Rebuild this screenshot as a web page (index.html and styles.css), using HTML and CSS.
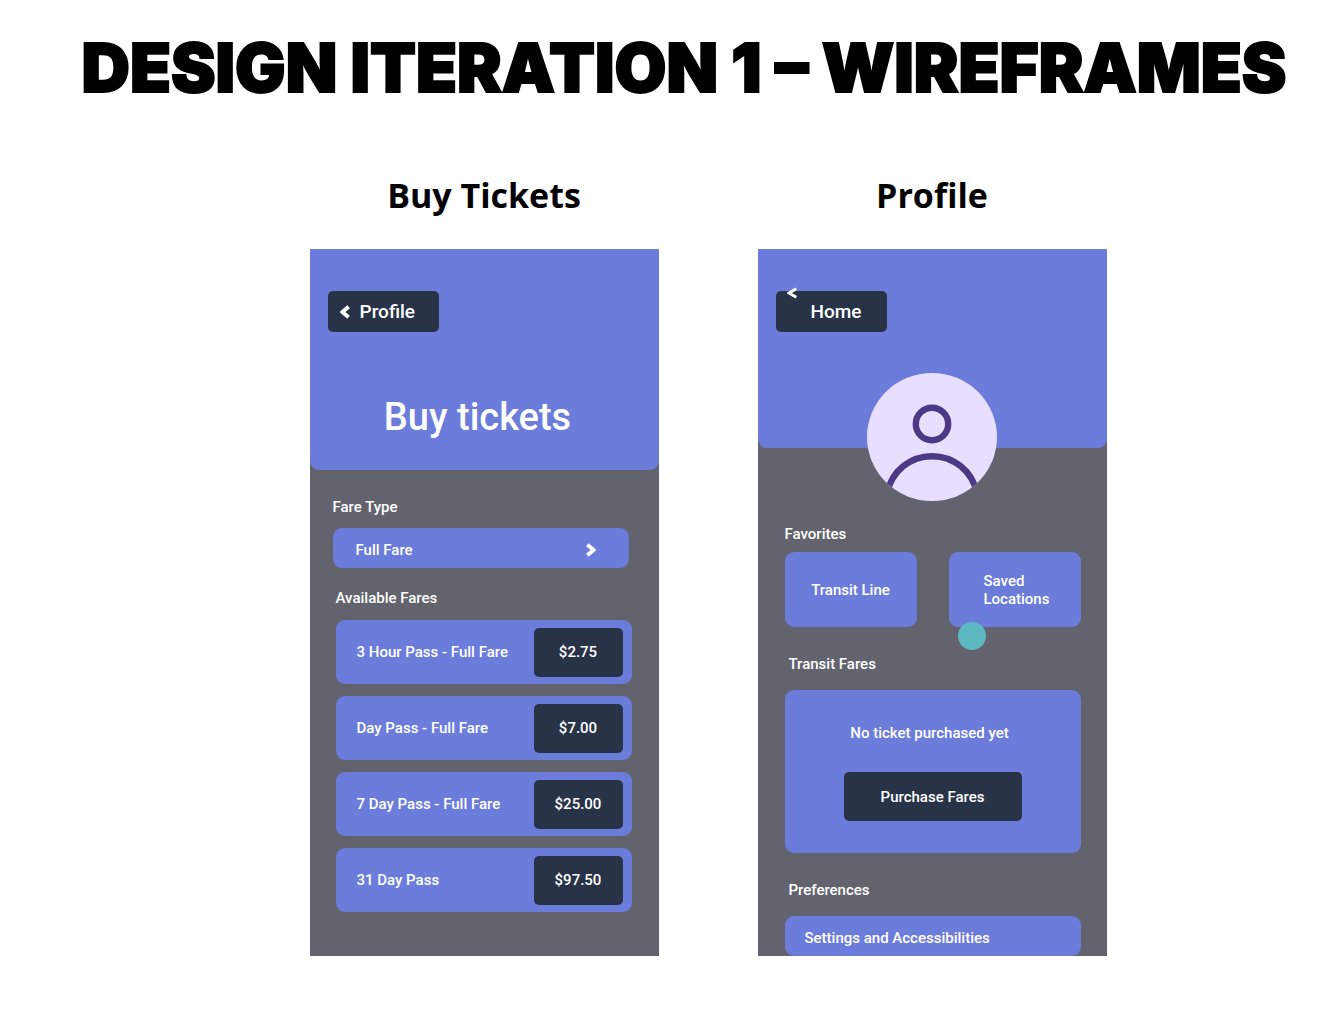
FILE: index.html
```html
<!DOCTYPE html>
<html lang="en">
<head>
<meta charset="utf-8">
<meta name="viewport" content="width=device-width, initial-scale=1">
<title>Design Iteration 1 – Wireframes</title>
<link rel="stylesheet" href="styles.css">
</head>
<body>
<h1 class="title">DESIGN ITERATION 1 – WIREFRAMES</h1>
<main class="boards">
  <section class="board">
    <h2 class="board-name">Buy Tickets</h2>
    <div class="phone">
      <header class="top top-tickets">
        <button class="back" type="button"><svg class="chevron" viewBox="0 0 10 14" aria-hidden="true"><path d="M8.600 1.800 2.400 7l6.200 5.200"/></svg>Profile</button>
        <h3 class="screen-name">Buy tickets</h3>
      </header>
      <div class="group fare-type">
        <h4 class="label" id="fare-type">Fare Type</h4>
        <button class="picker" type="button" aria-describedby="fare-type">Full Fare<svg class="chevron" viewBox="0 0 10 14" aria-hidden="true"><path d="M1.400 1.800 7.600 7l-6.200 5.200"/></svg></button>
      </div>
      <div class="group fares">
        <h4 class="label">Available Fares</h4>
        <ul class="fare-list">
          <li class="fare">3 Hour Pass - Full Fare<button class="price" type="button">$2.75</button></li>
          <li class="fare">Day Pass - Full Fare<button class="price" type="button">$7.00</button></li>
          <li class="fare">7 Day Pass - Full Fare<button class="price" type="button">$25.00</button></li>
          <li class="fare">31 Day Pass<button class="price" type="button">$97.50</button></li>
        </ul>
      </div>
    </div>
  </section>
  <section class="board">
    <h2 class="board-name">Profile</h2>
    <div class="phone">
      <header class="top top-profile">
        <button class="back back-home" type="button"><svg class="chevron chevron-raised" viewBox="0 0 10 12" aria-hidden="true"><path d="M9.300 1.700 2 6l7.300 4.300"/></svg>Home</button>
        <svg class="avatar" viewBox="0 0 130 128" role="img" aria-label="Profile picture">
          <defs><clipPath id="disc"><ellipse cx="65" cy="64" rx="65" ry="64"/></clipPath></defs>
          <g clip-path="url(#disc)">
            <rect width="130" height="128" fill="#e8deff"/>
            <g fill="none" stroke="#4d3886" stroke-width="6.400">
              <circle cx="65" cy="51" r="16.200"/>
              <path d="M20 120C25 98 43 83.200 65 83.200S105 98 110 120"/>
            </g>
          </g>
        </svg>
      </header>
      <div class="group favorites">
        <h4 class="label">Favorites</h4>
        <div class="tiles">
          <button class="tile" type="button">Transit Line</button>
          <button class="tile tile-saved" type="button">Saved<br>Locations<span class="pointer"></span></button>
        </div>
      </div>
      <div class="group transit">
        <h4 class="label inset">Transit Fares</h4>
        <div class="ticket">
          <p class="empty">No ticket purchased yet</p>
          <button class="purchase" type="button">Purchase Fares</button>
        </div>
      </div>
      <div class="group prefs">
        <h4 class="label inset">Preferences</h4>
        <button class="picker settings" type="button">Settings and Accessibilities</button>
      </div>
    </div>
  </section>
</main>
</body>
</html>
```
FILE: styles.css
```css
* { box-sizing: border-box; }

body {
  margin: 0;
  background: #fff;
  color: #000;
  font-family: Roboto, "Liberation Sans", sans-serif;
}

h1, h2, h3, h4, p, ul { margin: 0; padding: 0; }

.title {
  padding: 28px 0 0 36px;
  font: 900 67px/80px Inter, "Liberation Sans", sans-serif;
  text-align: center;
  white-space: nowrap;
  -webkit-text-stroke: 2px #000;
}

.boards {
  display: flex;
  flex-wrap: wrap;
  justify-content: center;
  gap: 48px 99px;
  padding: 63px 0 60px 84px;
}

.board {
  display: flex;
  flex-direction: column;
  gap: 30px;
  width: 349px;
}

.board-name {
  font: 700 34px/48px "Open Sans", "Noto Sans", sans-serif;
  text-align: center;
}

.phone {
  display: flex;
  flex-direction: column;
  flex: 1;
  background: #63636e;
  color: #fff;
  font-size: 15px;
  font-weight: 500;
  line-height: 18px;
}

.top {
  display: flex;
  flex-direction: column;
  background: #6c7cdb;
  border-radius: 0 0 9px 9px;
}

.top-tickets { gap: 61px; padding: 42px 31px 29px 18px; }
.top-profile { gap: 41px; padding: 42px 18px 0; }

button {
  border: 0;
  padding: 0;
  color: #fff;
  font: inherit;
  cursor: pointer;
}

.back {
  position: relative;
  display: flex;
  align-items: center;
  gap: 10px;
  width: 111px;
  height: 41px;
  padding-left: 12px;
  background: #283347;
  border-radius: 5px;
  font-size: 19px;
}

.back-home { padding-left: 35px; }

.chevron {
  width: 10px;
  height: 14px;
  fill: none;
  stroke: #fff;
  stroke-width: 4;
}

.chevron-raised {
  position: absolute;
  top: -4px;
  left: 11px;
  height: 12px;
  stroke-width: 3;
}

.screen-name {
  font-size: 38px;
  font-weight: 500;
  line-height: 48px;
  text-align: center;
}

.avatar {
  align-self: center;
  width: 130px;
  height: 128px;
  margin-bottom: -53px;
}

.group {
  display: flex;
  flex-direction: column;
  width: 100%;
}

.label { font-size: 15px; font-weight: 500; }
.inset { padding-left: 4px; }

.fare-type { gap: 12px; padding: 28px 30px 0 23px; }
.fares { gap: 13px; padding: 21px 27px 44px 26px; }

.picker {
  display: flex;
  align-items: center;
  justify-content: space-between;
  height: 40px;
  padding: 3px 33px 0 23px;
  background: #6c7cdb;
  border-radius: 9px;
  text-align: left;
}

.fare-list {
  display: flex;
  flex-direction: column;
  gap: 12px;
  list-style: none;
}

.fare {
  display: flex;
  align-items: center;
  justify-content: space-between;
  height: 64px;
  padding: 0 9px 0 21px;
  background: #6c7cdb;
  border-radius: 9px;
}

.price {
  width: 89px;
  height: 49px;
  background: #283347;
  border-radius: 5px;
}

.favorites { gap: 9px; padding: 77px 26px 0 27px; }

.tiles {
  display: grid;
  grid-template-columns: 1fr 1fr;
  gap: 32px;
}

.tile {
  position: relative;
  height: 75px;
  background: #6c7cdb;
  border-radius: 9px;
}

.tile-saved { padding-left: 35px; text-align: left; }

.pointer {
  position: absolute;
  left: 9px;
  bottom: -23px;
  width: 28px;
  height: 28px;
  background: #5cb7c1;
  border-radius: 50%;
}

.transit { gap: 17px; padding: 28px 26px 0 27px; }

.ticket {
  display: flex;
  flex-direction: column;
  align-items: center;
  gap: 30px;
  padding: 34px 0 32px;
  background: #6c7cdb;
  border-radius: 9px;
}

.empty { padding-right: 6px; }

.purchase {
  width: 178px;
  height: 49px;
  background: #283347;
  border-radius: 5px;
}

.prefs { gap: 17px; padding: 28px 26px 0 27px; }
.settings { padding-left: 20px; }
```
